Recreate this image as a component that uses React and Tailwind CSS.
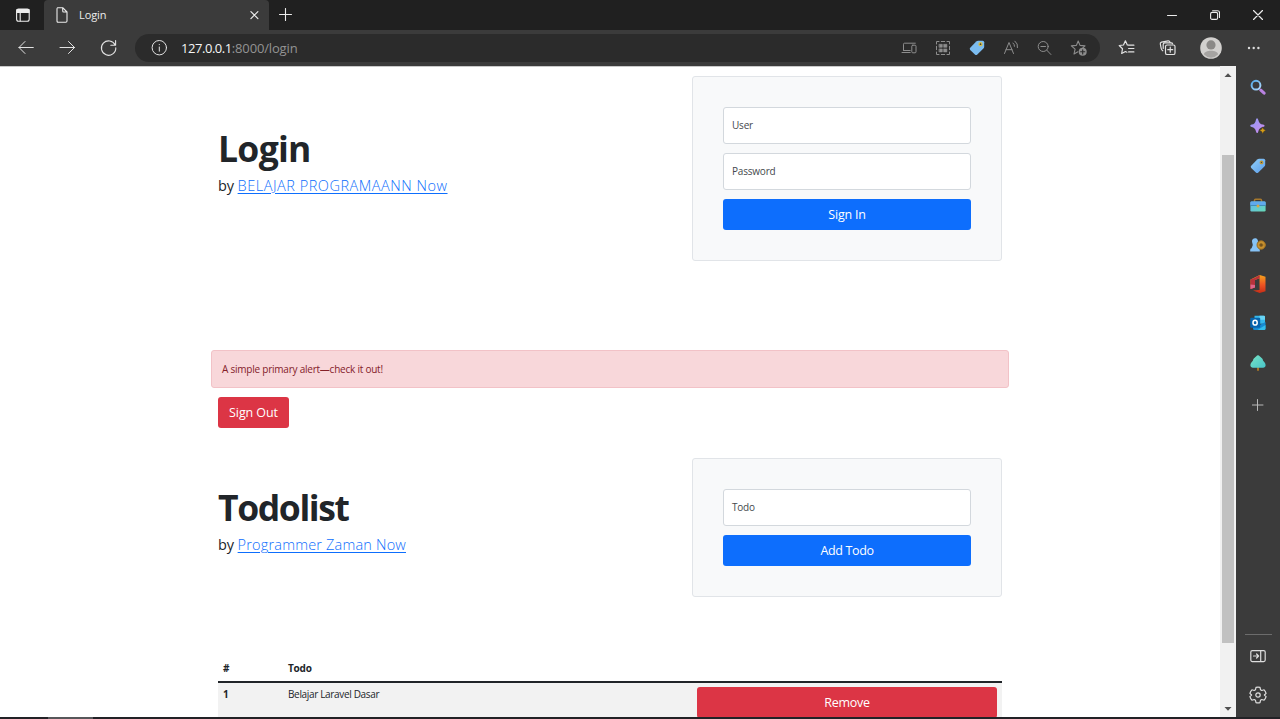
import React from "react";

function Icon({ size = 16, box = 16, className = "", sw = 1, children }) {
  return (
    <svg width={size} height={size} viewBox={`0 0 ${box} ${box}`} className={`block shrink-0 ${className}`} fill="none" stroke="currentColor" strokeWidth={sw} strokeLinecap="round" strokeLinejoin="round">
      {children}
    </svg>
  );
}

function TabBar() {
  return (
    <div className="flex h-[30px] shrink-0 items-stretch bg-[#202020] text-[#ececec]">
      <div className="flex w-[44px] items-center justify-center pl-px">
        <Icon size={14} box={14} sw={1.1}>
          <rect x="0.6" y="1" width="12.6" height="12.2" rx="2" />
          <path d="M1 1.6h12v2.8H1z" fill="currentColor" />
          <path d="M4.2 4.5v8.5" />
        </Icon>
      </div>
      <div className="flex w-[225px] items-center rounded-t-[4px] bg-[#3b3b3b] pl-[11px] pr-[10px]">
        <Icon size={14} box={14} sw={1.1} className="h-4 w-[14px]">
          <path d="M2.5-.3h5.2L12 4v9.1q0 1.2-1.2 1.2H3.2Q2 14.3 2 13.100V.7Q2-.3 3-.3ZM7.700-.2v3.200q0 1 1 1h3.100" />
        </Icon>
        <span className="ml-[10px] flex-1 text-[11px] leading-[16px] tracking-[-0.1px]">Login</span>
        <Icon size={10} box={10} sw={1.2}><path d="m1.900 1.600 7 7m0-7-7 7" /></Icon>
      </div>
      <div className="flex w-[33px] items-center justify-center">
        <Icon size={14} box={14} sw={1.1}><path d="M6.500.5v12M.5 6.500h12" /></Icon>
      </div>
      <div className="flex flex-1 items-center justify-end gap-[33px] pr-[17px]">
        <Icon size={10} box={10} sw={1.100}><path d="M.5 5.500h9" /></Icon>
        <Icon size={10} box={10} sw={1.100}>
          <rect x=".6" y="2.400" width="7" height="7" rx="1.500" />
          <path d="M2.600.7h4.900q2 0 2 2v4.800" />
        </Icon>
        <Icon size={10} box={10} sw={1.200}><path d="m.5.5 9 9m0-9-9 9" /></Icon>
      </div>
    </div>
  );
}

function Toolbar() {
  return (
    <div className="flex h-[36px] shrink-0 items-center bg-[#3b3b3b] pb-px text-[#e2e2e2]">
      <div className="flex w-[135px] shrink-0 items-center gap-[25px] pl-[18px]">
        <Icon><path d="M15.300 7.500H1m6-6-6 6 6 6" /></Icon>
        <Icon><path d="M1 7.500h14.500M9.500 1.500l6 6-6 6" /></Icon>
        <Icon size={18} box={18} sw={1.100}><path d="M15.200 6.200A7.200 7.200 0 1 0 15.800 8.800M15.600 1.500v4.700h-4.800" /></Icon>
      </div>
      <div className="flex h-[28px] w-[965px] items-center rounded-full bg-[#2b2b2b] pl-[16px] pr-[12px]">
        <Icon>
          <circle cx="8.300" cy="7.700" r="7.200" />
          <path d="M8.300 7v4.200M8.300 4.500v.2" />
        </Icon>
        <div className="ml-[14px] flex-1 text-[13px] leading-[18px]">
          <span className="tracking-[-0.45px] font-medium text-[#f5f5f5]">127.0.0.1</span>
          <span className="tracking-[-0.15px] text-[#939393]">:8000/login</span>
        </div>
        <div className="flex items-center gap-[18px] text-[#8d8d8d]">
          <Icon>
            <path d="M2.500 10.500V4.200q0-1 1-1h10.800M1 12.500h8.200M2.500 10.500h6.700" />
            <rect x="10.800" y="5.200" width="4.200" height="7.600" rx="1" />
          </Icon>
          <Icon>
            <path d="M1.500 4V1.500H4M6.300 1.500h3.400M12 1.500h2.500V4M1.500 6.300v3.400M14.500 6.300v3.400M1.500 12v2.500H4M6.300 14.500h3.400M12 14.500h2.500V12" />
            <path d="M4.300 4.300h3v3h-3zM8.900 4.300h3v3h-3zM4.300 8.900h3v3h-3zM8.900 8.900h3v3h-3z" fill="currentColor" strokeWidth=".6" />
          </Icon>
          <Icon>
            <path d="M7.200 1.500q.8-.8 1.900-.8h4.600q1.500 0 1.500 1.500v4.500q0 1-.8 1.800l-6.100 6q-1.200 1.100-2.400 0L1.200 9.900q-1-1.100 0-2.200Z" fill="#7bbcf0" stroke="none" />
            <circle cx="11.500" cy="4.200" r="1.500" fill="#454236" stroke="#d7bd45" strokeWidth="1.300" />
          </Icon>
          <Icon>
            <path d="m1.500 13.500 4.500-11L10.500 13.500M3 9.700h6M10 3q1.600 1.300 1.500 3.300M11.900 1.100q3.400 2.600 2.600 6.500" />
          </Icon>
          <Icon className="-ml-px"><circle cx="7.200" cy="6.500" r="5" /><path d="M4.900 6.500h4.600M10.800 10.200l4.100 4.300" /></Icon>
          <Icon size={18} box={18} sw={1.100}>
            <path d="M8.200 2 10 6.400l5 .5-2.200 2M7.900 12.800 4 15l1.100-4.900L1.300 6.900l5.100-.5L8.200 2" />
            <circle cx="12.700" cy="12.800" r="4" fill="currentColor" stroke="none" />
            <path d="M12.700 10.700v4.200M10.600 12.800h4.200" stroke="#2b2b2b" />
          </Icon>
        </div>
      </div>
      <div className="flex flex-1 items-center pl-[18px]">
        <Icon size={18} box={18} sw={1.200}>
          <path d="M10.800 6.200 9.300 5.900 7.400 1.800 5.500 6l-4.300.5L4.500 9.700 3.700 14.500l3.700-2 1.500.7M10.600 6.200h5.300M10.600 9.500h5.300M10.600 12.900h5.300" />
        </Icon>
        <Icon size={18} box={18} sw={1.200} className="ml-[23px]">
          <rect x="6.500" y="6" width="9.500" height="9.500" rx="1.600" />
          <path d="M11.250 8.200v5M8.750 10.700h5M3.800 11.800Q2.500 11 2.200 9.500L1.300 5q-.3-1.500 1.200-1.900l6.600-1.300q1.400-.2 1.900 1.300M4.200 9.500V5.500q0-1.700 1.700-1.700h6.300q1.200 0 1.400 1" />
        </Icon>
        <svg width="22" height="22" viewBox="0 0 22 22" className="ml-[22.500px] block shrink-0">
          <circle cx="11" cy="11" r="10.800" fill="#d2d0ce" />
          <circle cx="11" cy="7.900" r="4.600" fill="#8b8987" />
          <path d="M4 17.500c0-5 14-5 14 0q-3 3.200-7 3.200t-7-3.200Z" fill="#a5a3a1" />
        </svg>
        <svg width="14" height="4" viewBox="0 0 14 4" className="ml-[25.500px] block shrink-0" fill="#dddddd">
          <circle cx="2" cy="2" r="1.200" /><circle cx="6.700" cy="2" r="1.200" /><circle cx="11.400" cy="2" r="1.200" />
        </svg>
      </div>
    </div>
  );
}

function Sidebar() {
  return (
    <aside className="flex w-[44px] shrink-0 flex-col items-center bg-[#3b3b3b] pt-[13px] text-[#dddddd]">
      <svg width="0" height="0" className="absolute">
        <defs>
          <linearGradient id="lens" x2="1" y2="1"><stop stopColor="#52a9e6" /><stop offset="1" stopColor="#b3dcff" /></linearGradient>
          <linearGradient id="spark" x2="1" y2="1"><stop stopColor="#8c9cf6" /><stop offset="1" stopColor="#d08aed" /></linearGradient>
          <linearGradient id="label" x2="1" y2="1"><stop stopColor="#91d0fa" /><stop offset="1" stopColor="#5b9ce8" /></linearGradient>
          <linearGradient id="case" y2="1"><stop stopColor="#62b6ee" /><stop offset="1" stopColor="#66d9b6" /></linearGradient>
          <linearGradient id="office" y2="1" x2="0"><stop stopColor="#f6a21c" /><stop offset=".55" stopColor="#ed5423" /><stop offset="1" stopColor="#c72d17" /></linearGradient>
          <linearGradient id="tree" x2="1" y2="1"><stop stopColor="#78e3c4" /><stop offset="1" stopColor="#48c4c9" /></linearGradient>
        </defs>
      </svg>
      <div className="flex flex-col items-center gap-[23.400px]">
        <Icon>
          <path d="m10.800 11.200 3.300 3" stroke="#b982e1" strokeWidth="3" />
          <circle cx="6" cy="6.200" r="4.400" stroke="url(#lens)" strokeWidth="2" />
        </Icon>
        <Icon>
          <path d="M7 .3q1 0 1.300 1.600.8 4 4.700 4.700 1.600.4 1.600 1.200T13 9q-4 .8-4.700 4.400Q8 15 7.200 15t-1.200-1.600Q5.200 9.700 1.700 9 .2 8.700.2 7.800T1.700 6.600Q5.300 6 5.900 1.900 6.200.3 7 .3Z" fill="url(#spark)" stroke="none" />
          <path d="M12.700 9.300q.6 2.700 3.200 3.200-2.600.6-3.200 3.200-.6-2.600-3.200-3.200 2.600-.5 3.200-3.200Z" fill="#d69d16" stroke="#473b26" strokeWidth=".5" />
        </Icon>
        <Icon>
          <path d="M7.200 1.500q.8-.8 1.900-.8h4.600q1.500 0 1.500 1.500v4.500q0 1-.8 1.800l-6.100 6q-1.200 1.100-2.400 0L1.200 9.900q-1-1.100 0-2.200Z" fill="url(#label)" stroke="none" />
          <circle cx="11.500" cy="4.400" r="1.300" fill="#3d4855" stroke="#c39b35" strokeWidth="1.200" />
        </Icon>
        <Icon>
          <path d="M4.500 5V3.300q0-1 1-1h5q1 0 1 1V5" stroke="#a6782d" strokeWidth="1.500" />
          <rect x=".4" y="4.500" width="15.200" height="10" rx="1.200" fill="url(#case)" stroke="none" />
          <path d="M.4 5.700q0-1.200 1.200-1.200h12.800q1.200 0 1.200 1.200v3H.4Z" fill="#60a9ed" stroke="none" />
          <path d="M.5 8.500h15" stroke="#357fa5" strokeWidth=".7" />
          <circle cx="8" cy="9" r="1.500" fill="#d7a842" stroke="none" />
        </Icon>
        <Icon>
          <path d="M2 4a3 3 0 1 1 5.700 1.500L7 8l1.300 3.200q1.500.2 1.500 1.700V14.500H.2v-1.600q0-1.500 1.400-1.700L2.800 8l-.6-2.500Q2 5 2 4Z" fill="#86c2f5" stroke="none" />
          <circle cx="11.200" cy="8" r="4.200" fill="#c89130" stroke="#9c7024" />
          <circle cx="11.200" cy="8" r="1.600" fill="#71501f" stroke="#8d6520" strokeWidth=".7" />
        </Icon>
        <svg width="16" height="18" viewBox="0 0 16 18" className="-my-px block">
          <path d="M9.700 0 15.500 1.700v14.500L9.700 18 3 15.600l6.500-.6V3.200L5 4.900v7.500L.5 14V4.500Z" fill="url(#office)" />
          <path d="M.5 4.500 5 2.700 9.700 0v3.200L5 4.900v7.500L.5 14Z" fill="#b8323b" />
          <path d="M.5 9.500 5 10v2.400L.5 14Z" fill="#df658b" />
        </svg>
        <Icon>
          <path d="M4.500.8h9q1.500 0 1.500 1v7H4.500Z" fill="#36b8ec" stroke="none" />
          <path d="M9.500.8h4.500q1 0 1 1v3H9.500z" fill="#67d4f4" stroke="none" />
          <path d="M3 7.500 9.500 10l6-3v6.500q0 1.500-1.500 1.500H4.500Q3 15 3 13.500Z" fill="#168bd4" stroke="none" />
          <path d="m7.500 15 8-5v3.500q0 1.500-1.500 1.500Z" fill="#32bdea" stroke="none" />
          <rect x=".2" y="2.700" width="10" height="10" rx="1" fill="#0764ad" stroke="none" />
          <ellipse cx="5.100" cy="7.700" rx="2.100" ry="2.400" stroke="#fff" strokeWidth="1.500" />
        </Icon>
        <Icon>
          <path d="M8 11v4" stroke="#b27d28" strokeWidth="1.800" />
          <path d="M8 .2q1 0 1.700 1l2.500 2.300q.8.900.8 2.100l2 2.500q1.800 4.300-1.700 4.700H2.700Q-.8 12.400 1 8.100l2-2.500q0-1.200.8-2.100l2.500-2.300q.7-1 1.700-1Z" fill="url(#tree)" stroke="none" />
        </Icon>
      </div>
      <Icon size={12} box={12} className="mt-[28px] text-[#b8b8b8]"><path d="M5.500.5v11M0 6h11" /></Icon>
      <div className="flex-1" />
      <div className="h-px w-[27px] bg-[#6c6c6c]" />
      <Icon className="mt-[13px]" sw={1.200}>
        <rect x=".8" y="2.600" width="14.400" height="11" rx="1.500" />
        <path d="M10.700 2.700v10.800M3.500 8h5M6.600 6l2 2-2 2" />
      </Icon>
      <Icon size={18} box={18} sw={1.200} className="mb-[13px] mt-[22px]">
        <path d="M7 1.400q2-.5 4 0l.5 2.300 1.300.8 2.300-.7q1.400 1.500 2 3.500L15.400 9l1.700 1.700q-.6 2-2 3.500l-2.300-.7-1.300.8-.5 2.300q-2 .5-4 0l-.5-2.300-1.300-.8-2.300.7q-1.400-1.500-2-3.500L2.600 9 .9 7.300q.6-2 2-3.500l2.300.7 1.300-.8Z" />
        <circle cx="9" cy="9" r="2.200" />
      </Icon>
    </aside>
  );
}

function ScrollBar() {
  return (
    <div className="flex w-[16px] shrink-0 flex-col items-center bg-[#f1f1f1] pb-[6px] pt-[7px]">
      <svg width="8" height="4" className="block" fill="#505050"><path d="M.5 4h7L4 .3Z" /></svg>
      <div className="mt-[78px] h-[488px] w-[12px] bg-[#c1c1c1]" />
      <div className="flex-1" />
      <svg width="8" height="4" className="block" fill="#505050"><path d="M.5 0h7L4 3.700Z" /></svg>
    </div>
  );
}

function Field({ label }) {
  return (
    <div className="mb-[9px] flex h-[37px] items-center rounded-[3px] border border-[#d3d8dd] bg-white px-2 text-[10px] leading-[15px] tracking-[-0.200px] text-[#45494d]">
      {label}
    </div>
  );
}

function Button({ className, children }) {
  return (
    <button type="button" className={`block h-[31px] rounded-[3px] pt-px text-[12.500px] font-medium leading-[18px] text-white ${className}`}>
      {children}
    </button>
  );
}

function Hero({ title, by, titleClass, linkClass, copyClass, children }) {
  return (
    <section className="flex justify-between px-[7px]">
      <div className={copyClass}>
        <h1 className={`text-[35.500px] font-bold leading-[44px] ${titleClass}`}>{title}</h1>
        <p className="mt-[5px] text-[14.500px] leading-[22px]">
          <span className="tracking-[-0.100px]">by&nbsp;</span>
          <a className={`text-[#0d6efd] underline decoration-1 underline-offset-[1.500px] ${linkClass}`}>{by}</a>
        </p>
      </div>
      {children}
    </section>
  );
}

export default function App() {
  return (
    <div className="flex h-[719px] w-[1280px] flex-col overflow-hidden bg-white font-['Open_Sans','Noto_Sans',sans-serif] text-[#212529]">
      <TabBar />
      <Toolbar />
      <div className="flex h-[651px] shrink-0">
        <main className="flex-1 overflow-hidden border-t border-[#c9c9c9] bg-white pl-[211px] pt-[9px]">
          <div className="w-[798px]">
            <Hero title="Login" by="BELAJAR PROGRAMAANN Now" copyClass="pt-[50px]" titleClass="tracking-[-0.700px]" linkClass="font-light tracking-[0.520px]">
              <form className="h-[185px] w-[310px] rounded-[3px] border border-[#e1e4e8] bg-[#f8f9fa] p-[30px]">
                <Field label="User" />
                <Field label="Password" />
                <Button className="w-full bg-[#0d6efd] tracking-[-0.200px]">Sign In</Button>
              </form>
            </Hero>
            <div className="mt-[89px] flex h-[38px] items-center rounded-[3px] border border-[#f2c2c7] bg-[#f8d7da] px-[10px] text-[10px] tracking-[-0.230px] text-[#842029]">
              A simple primary alert—check it out!
            </div>
            <Button className="ml-[7px] mt-[9px] w-[71px] bg-[#dc3545] tracking-[-0.100px]">Sign Out</Button>
            <div className="mt-[30px]">
              <Hero title="Todolist" by="Programmer Zaman Now" copyClass="pt-[27px]" titleClass="tracking-[-1.400px]" linkClass="font-light tracking-[0.180px]">
                <form className="h-[139px] w-[310px] rounded-[3px] border border-[#e1e4e8] bg-[#f8f9fa] p-[30px]">
                  <Field label="Todo" />
                  <Button className="w-full bg-[#0d6efd] tracking-[-0.350px]">Add Todo</Button>
                </form>
              </Hero>
            </div>
            <div className="mx-[7px] mt-[64px] text-[10px] leading-[15px]">
              <div className="flex h-[22px] border-b-2 border-[#212529] pl-[5px] font-bold tracking-[-0.200px]">
                <span className="w-[65px]">#</span>
                <span>Todo</span>
              </div>
              <div className="flex h-[34px] bg-[#f2f2f2] pl-[5px] pr-[5px] pt-[4px] tracking-[-0.340px]">
                <span className="w-[65px] font-bold">1</span>
                <span className="flex-1">Belajar Laravel Dasar</span>
                <Button className="w-[300px] bg-[#dc3545] tracking-[-0.300px]">Remove</Button>
              </div>
            </div>
          </div>
        </main>
        <ScrollBar />
        <Sidebar />
      </div>
      <div className="h-[2px] shrink-0 bg-[#222226] pl-[48px]">
        <div className="h-[2px] w-[45px] bg-[#57575a]" />
      </div>
    </div>
  );
}
